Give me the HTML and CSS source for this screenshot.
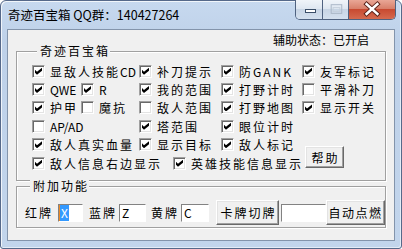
FILE: index.html
```html
<!DOCTYPE html>
<html lang="zh-CN">

<head>
    <meta charset="UTF-8">
    <meta name="viewport" content="width=device-width, initial-scale=1.0">
    <link rel="stylesheet" href="styles.css">
    <title>奇迹百宝箱</title>
</head>

<body>
    <div class="window">
        <div class="titlebar">
            <span class="title">奇迹百宝箱 QQ群：140427264</span>
            <div class="caption">
                <span class="cap cap-min">
                    <svg width="26" height="19" viewBox="0 0 26 19"><rect x="9.5" y="9.5" width="10" height="3" fill="#fff" stroke="#3b4e68"/></svg>
                </span>
                <span class="cap cap-max">
                    <svg width="26" height="19" viewBox="0 0 26 19"><rect x="8.5" y="4.5" width="11" height="9" fill="none" stroke="#a9b6c6"/><rect x="10.5" y="7.5" width="7" height="4" fill="none" stroke="#c5d0dc"/></svg>
                </span>
                <span class="cap cap-close">
                    <svg width="47" height="19" viewBox="0 0 47 19"><path d="M18 4 L29 14 M29 4 L18 14" stroke="#5b231a" stroke-width="4.6" stroke-linecap="square"/><path d="M18 4 L29 14 M29 4 L18 14" stroke="#fff" stroke-width="2.6" stroke-linecap="square"/></svg>
                </span>
            </div>
        </div>

        <div class="client">
            <div class="status">辅助状态：已开启</div>

            <fieldset class="group main">
                <legend>奇迹百宝箱</legend>
                <div class="opts">
                    <label class="opt c1"><span class="box on"></span>显敌人技能<span class="lat">CD</span></label>
                    <label class="opt c3"><span class="box on"></span>补刀提示</label>
                    <label class="opt c5"><span class="box on"></span>防GANK</label>
                    <label class="opt c6"><span class="box on"></span>友军标记</label>

                    <label class="opt c1s"><span class="box on"></span><span class="lat">QWE</span></label>
                    <label class="opt c2s"><span class="box on"></span>R</label>
                    <label class="opt c3"><span class="box on"></span>我的范围</label>
                    <label class="opt c5"><span class="box on"></span>打野计时</label>
                    <label class="opt c6"><span class="box"></span>平滑补刀</label>

                    <label class="opt c1s"><span class="box on"></span>护甲</label>
                    <label class="opt c2s"><span class="box"></span>魔抗</label>
                    <label class="opt c3"><span class="box"></span>敌人范围</label>
                    <label class="opt c5"><span class="box on"></span>打野地图</label>
                    <label class="opt c6"><span class="box on"></span>显示开关</label>

                    <label class="opt c1"><span class="box"></span><span class="lat">AP/AD</span></label>
                    <label class="opt c3"><span class="box on"></span>塔范围</label>
                    <label class="opt c5"><span class="box on"></span>眼位计时</label>

                    <label class="opt c1"><span class="box on"></span>敌人真实血量</label>
                    <label class="opt c3"><span class="box on"></span>显示目标</label>
                    <label class="opt c5"><span class="box on"></span>敌人标记</label>

                    <label class="opt c1w"><span class="box on"></span>敌人信息右边显示</label>
                    <label class="opt c4w"><span class="box on"></span>英雄技能信息显示</label>

                    <button type="button" class="btn help">帮助</button>
                </div>
            </fieldset>

            <fieldset class="group extra">
                <legend>附加功能</legend>
                <div class="cards">
                    <span class="lbl l-red">红牌</span>
                    <span class="edit e-red"><span class="sel">X</span></span>
                    <span class="lbl l-blue">蓝牌</span>
                    <span class="edit e-blue">Z</span>
                    <span class="lbl l-gold">黄牌</span>
                    <span class="edit e-gold">C</span>
                    <button type="button" class="btn b-pick">卡牌切牌</button>
                    <span class="edit e-key"></span>
                    <button type="button" class="btn b-ign">自动点燃</button>
                </div>
            </fieldset>
        </div>
    </div>
</body>

</html>
```

FILE: styles.css
```css
* {
    box-sizing: border-box;
}

body {
    margin: 0;
    background: #fff;
    font-family: "Noto Sans CJK SC", "Noto Sans", sans-serif;
    font-size: 12px;
    color: #000;
}

/* marco de la ventana */
.window {
    width: 402px;
    height: 249px;
    border: 1px solid #56698a;
    border-radius: 6px 6px 3px 3px;
    background: linear-gradient(#c7d9ef, #bed1e9 40px, #c2d5ec);
    box-shadow: inset 1px 1px 0 rgba(255, 255, 255, 0.75), inset -1px -1px 0 rgba(255, 255, 255, 0.55);
    display: flex;
    flex-direction: column;
}

.titlebar {
    height: 28px;
    flex: none;
    display: flex;
    align-items: flex-start;
    padding-left: 7px;
}

.title {
    font-size: 12.5px;
    line-height: 28px;
    white-space: nowrap;
}

.caption {
    margin: -1px 5px 0 auto;
    height: 20px;
    display: flex;
    border: 1px solid #4f6280;
    border-top: 0;
    border-radius: 0 0 5px 5px;
    overflow: hidden;
}

.cap {
    width: 26px;
    display: flex;
    background: linear-gradient(#f0f4f9, #dfe7f1 45%, #c8d5e5 50%, #d4e0ee);
}

.cap+.cap {
    border-left: 1px solid #4f6280;
}

.cap-close {
    width: 47px;
    background: linear-gradient(#e9a796, #d8806b 45%, #c84a31 50%, #d56a4f);
}

/* area cliente */
.client {
    flex: none;
    height: 212px;
    margin: 0 6px;
    border: 1px solid #8394ab;
    background: #f0f0f0;
    padding: 0 8px;
}

.status {
    height: 15px;
    line-height: 20px;
    text-align: right;
    padding-right: 17px;
}

.group {
    margin: 0;
    padding: 0;
    min-inline-size: 0;
    border: 1px solid #a0a0a0;
    box-shadow: inset 1px 1px 0 #fff, 1px 1px 0 #fff;
}

.group legend {
    margin-left: 5px;
    padding: 0 0 0 3px;
    line-height: 12px;
    letter-spacing: 2px;
    background: #f0f0f0;
}

.main {
    padding: 5px 0 8px 15px;
}

.opts {
    display: grid;
    grid-template-columns: 49px 58px 34px 48px 81px 1fr;
    grid-template-rows: repeat(6, 18.4px);
}

.opt {
    display: flex;
    align-items: center;
    white-space: nowrap;
    letter-spacing: 2px;
}

.c1 {
    grid-column: 1 / 3;
}

.c1s {
    grid-column: 1 / 2;
}

.c2s {
    grid-column: 2 / 3;
}

.c3 {
    grid-column: 3 / 5;
}

.c5 {
    grid-column: 5 / 6;
}

.c6 {
    grid-column: 6 / 7;
}

.c1w {
    grid-column: 1 / 4;
}

.c4w {
    grid-column: 4 / 6;
}

.lat {
    letter-spacing: 0;
}

/* casilla clasica */
.box {
    flex: none;
    position: relative;
    width: 13px;
    height: 13px;
    margin-right: 5px;
    background: #fff;
    border: 1px solid;
    border-color: #a0a0a0 #fff #fff #a0a0a0;
    box-shadow: inset 1px 1px 0 #696969, inset -1px -1px 0 #e3e3e3;
}

.box.on::after {
    content: "";
    position: absolute;
    left: 2px;
    top: 2px;
    width: 7px;
    height: 7px;
    background: #000;
    clip-path: polygon(0 28.5%, 28.5% 57%, 100% 0, 100% 43%, 28.5% 100%, 0 71.5%);
}

.btn {
    font: inherit;
    color: #000;
    white-space: nowrap;
    letter-spacing: 2px;
    padding: 0 0 0 2px;
    background: #f0f0f0;
    border: 1px solid;
    border-color: #fff #696969 #696969 #fff;
    box-shadow: inset -1px -1px 0 #a0a0a0, inset 1px 1px 0 #e3e3e3;
}

.help {
    grid-column: 6;
    grid-row: 5 / 7;
    align-self: end;
    margin: 0 0 4px 3px;
    width: 39px;
    height: 22px;
}

/* grupo de cartas */
.extra {
    margin-top: -1px;
    padding: 8px 0 2px 8px;
}

.cards {
    display: flex;
    align-items: center;
    height: 25px;
}

.lbl {
    letter-spacing: 2px;
    width: 28px;
    flex: none;
}

.edit {
    flex: none;
    height: 18px;
    line-height: 16px;
    padding-left: 2px;
    background: #fff;
    border: 1px solid;
    border-color: #828282 #fff #fff #828282;
}

.sel {
    display: inline-block;
    height: 16px;
    padding: 0 1px;
    color: #fff;
    background: #3399ff;
    border-left: 1px solid #f08a24;
}

.e-red {
    margin-left: 5px;
    width: 25px;
    padding-left: 0;
}

.l-blue {
    margin-left: 6px;
}

.e-blue {
    margin-left: 2px;
    width: 27px;
}

.l-gold {
    margin-left: 5px;
}

.e-gold {
    margin-left: 2px;
    width: 28px;
}

.b-pick {
    margin-left: 7px;
    width: 63px;
    height: 25px;
}

.e-key {
    margin-left: 2px;
    width: 45px;
}

.b-ign {
    width: 59px;
    height: 25px;
    padding: 0;
    letter-spacing: 1.5px;
}
```
